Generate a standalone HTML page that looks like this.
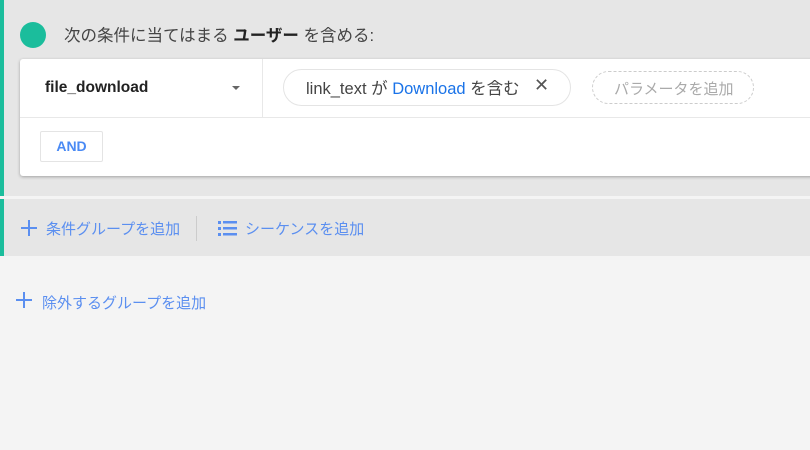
<!DOCTYPE html><html><head><meta charset="utf-8"><style>
*{margin:0;padding:0;box-sizing:border-box}
body{width:810px;height:450px;overflow:hidden;background:#f4f4f4;font-family:"Liberation Sans","Noto Sans CJK JP",sans-serif;position:relative}
.top{position:absolute;left:0;top:0;width:810px;height:256px;background:#e6e6e6}
.bar{position:absolute;left:0;top:0;width:4px;height:198px;background:#1bbd9c}
.bar2{position:absolute;left:0;top:198px;width:4px;height:58px;background:#1bbd9c}
.wl{position:absolute;left:0;top:196px;width:810px;height:3px;background:#f4f4f4}
.circ{position:absolute;left:20px;top:22px;width:26px;height:26px;border-radius:50%;background:#1bbd9c}
.t{position:absolute;left:64px;top:22px;font-size:16.5px;color:#444}
.card{position:absolute;left:20px;top:59px;width:800px;height:117px;background:#fff;border-radius:3px;box-shadow:0 1px 3px rgba(0,0,0,.3)}
.hd{position:absolute;left:0;top:58px;width:800px;height:1px;background:#e8e8e8}
.vd{position:absolute;left:242px;top:0;width:1px;height:58px;background:#e8e8e8}
.ev{position:absolute;left:25px;top:20px;font-size:15.5px;font-weight:bold;color:#222}
.arr{position:absolute;left:212px;top:27px;border-left:4px solid transparent;border-right:4px solid transparent;border-top:4px solid #666}
.chip{position:absolute;left:263px;top:10px;width:288px;height:37px;border:1px solid #e4e4e4;border-radius:19px;font-size:16.5px;color:#444;padding:5px 0 0 22px;white-space:nowrap}
.chip b{font-weight:normal;color:#1a73e8}
.x{position:absolute;left:250px;top:5px;font-size:18px;color:#555}
.pa{position:absolute;left:572px;top:12px;width:162px;height:33px;border:1px dashed #ccc;border-radius:17px;font-size:15px;color:#aaa;padding:6px 0 0 21px}
.and{position:absolute;left:20px;top:72px;width:63px;height:31px;border:1px solid #e4e4e4;border-radius:2px;color:#4a8af4;font-weight:bold;font-size:14px;text-align:center;line-height:29px}
.lk{position:absolute;font-size:15px;color:#5b8ff0}
.sep{position:absolute;left:196px;top:216px;width:1px;height:25px;background:#ccc}
</style></head><body>
<div class="top"></div><div class="bar"></div><div class="bar2"></div><div class="wl"></div>
<div class="circ"></div>
<div class="t">次の条件に当てはまる <b style="color:#222">ユーザー</b> を含める:</div>
<div class="card"><div class="hd"></div><div class="vd"></div>
<div class="ev">file_download</div><div class="arr"></div>
<div class="chip">link_text が <b>Download</b> を含む<span class="x">✕</span></div>
<div class="pa">パラメータを追加</div>
<div class="and">AND</div></div>
<svg style="position:absolute;left:20px;top:219px" width="18" height="18"><path d="M9 1v16M1 9h16" stroke="#5b8ff0" stroke-width="2"/></svg>
<div class="lk" style="left:46px;top:218px">条件グループを追加</div>
<div class="sep"></div>
<svg style="position:absolute;left:218px;top:220px" width="20" height="17"><g fill="#5b8ff0"><rect x="0" y="1" width="3" height="3"/><rect x="0" y="7" width="3" height="3"/><rect x="0" y="13" width="3" height="3"/><rect x="5" y="1" width="14" height="2.5"/><rect x="5" y="7" width="14" height="2.5"/><rect x="5" y="13" width="14" height="2.5"/></g></svg>
<div class="lk" style="left:245px;top:218px">シーケンスを追加</div>
<svg style="position:absolute;left:15px;top:291px" width="18" height="18"><path d="M9 1v16M1 9h16" stroke="#5b8ff0" stroke-width="2"/></svg>
<div class="lk" style="left:42px;top:292px">除外するグループを追加</div>
</body></html>
